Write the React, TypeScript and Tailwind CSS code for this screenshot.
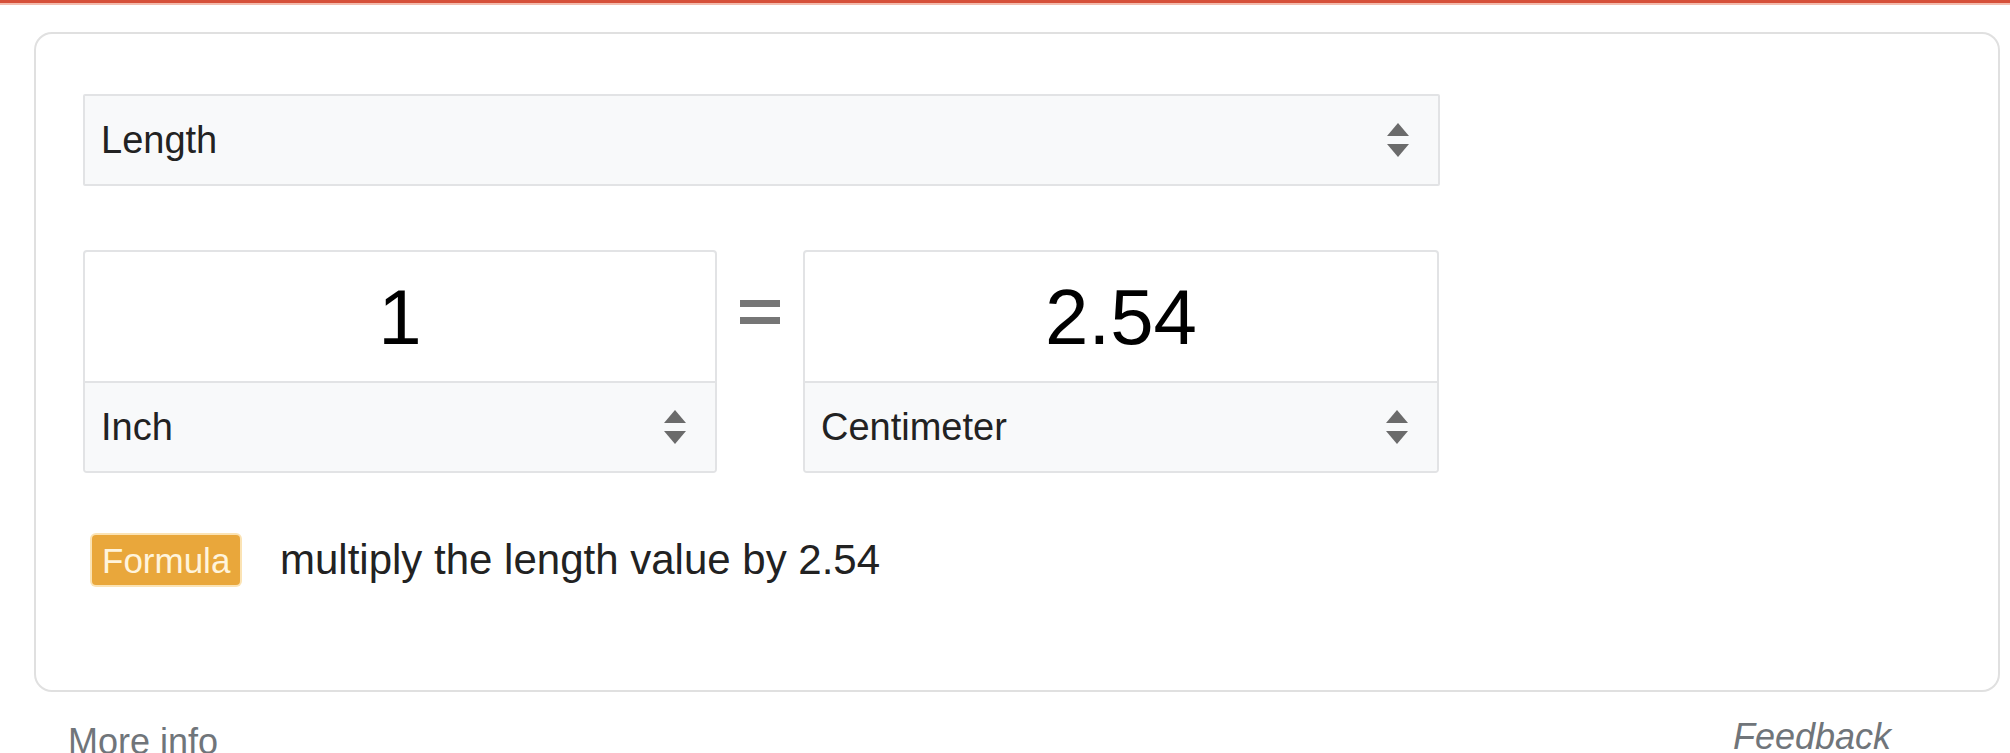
import React from 'react'

const font = "font-['Liberation_Sans',Arial,Helvetica,sans-serif]"

function UpDown() {
  return (
    <svg width="24" height="34" viewBox="0 0 24 34" aria-hidden>
      <path d="M12 0 L23 13 L1 13 Z" fill="#6b6b6b" />
      <path d="M1 21 L23 21 L12 34 Z" fill="#6b6b6b" />
    </svg>
  )
}

function UnitSelect({ label, className }: { label: string; className?: string }) {
  return (
    <div className={`flex items-center justify-between bg-[#f8f9fa] pl-[16px] pr-[28px] ${className ?? ''}`}>
      <span className="text-[38px] leading-none text-[#222]">{label}</span>
      <UpDown />
    </div>
  )
}

function Converter({ value, unit, width }: { value: string; unit: string; width: string }) {
  return (
    <div className={`${width} h-[223px] rounded-[4px] border-2 border-[#e2e3e5] overflow-hidden bg-white`}>
      <div className="h-[129px] flex items-center justify-center">
        <span className="text-[78px] leading-none text-black">{value}</span>
      </div>
      <UnitSelect label={unit} className="h-[90px] border-t-2 border-[#e2e3e5]" />
    </div>
  )
}

export default function App() {
  return (
    <div className={`min-h-screen w-full bg-white ${font}`}>
      <div className="h-[3px] bg-[#d6503a]" />
      <div className="h-[2px] bg-[#f3bcae]" />

      <div className="pl-[34px] pr-[10px] pt-[27px]">
        <section className="h-[660px] rounded-[18px] border-2 border-[#e0e0e0] pl-[47px] pt-[60px]">
          <UnitSelect
            label="Length"
            className="w-[1357px] h-[92px] border-2 border-[#e2e3e5] rounded-[2px]"
          />

          <div className="mt-[64px] flex items-start">
            <Converter value="1" unit="Inch" width="w-[634px]" />
            <div className="w-[86px] flex flex-col items-center pt-[50px] gap-[10px]" aria-hidden>
              <div className="w-[40px] h-[7px] bg-[#767676]" />
              <div className="w-[40px] h-[7px] bg-[#767676]" />
            </div>
            <Converter value="2.54" unit="Centimeter" width="w-[636px]" />
          </div>

          <div className="mt-[62px] flex items-center">
            <span className="ml-[9px] w-[148px] h-[50px] flex items-center pl-[10px] rounded-[4px] bg-[#e9a73b] ring-2 ring-[#fbe3b4] text-[35px] leading-none text-[#fff4dc]">
              Formula
            </span>
            <span className="ml-[40px] text-[42px] leading-none text-[#222]">
              multiply the length value by 2.54
            </span>
          </div>
        </section>

        <div className="mt-[27px] flex items-start justify-between pl-[34px] pr-[109px]">
          <span className="mt-[5px] text-[36px] leading-none text-[#70757a]">More info</span>
          <span className="text-[36px] leading-none italic text-[#70757a]">Feedback</span>
        </div>
      </div>
    </div>
  )
}
